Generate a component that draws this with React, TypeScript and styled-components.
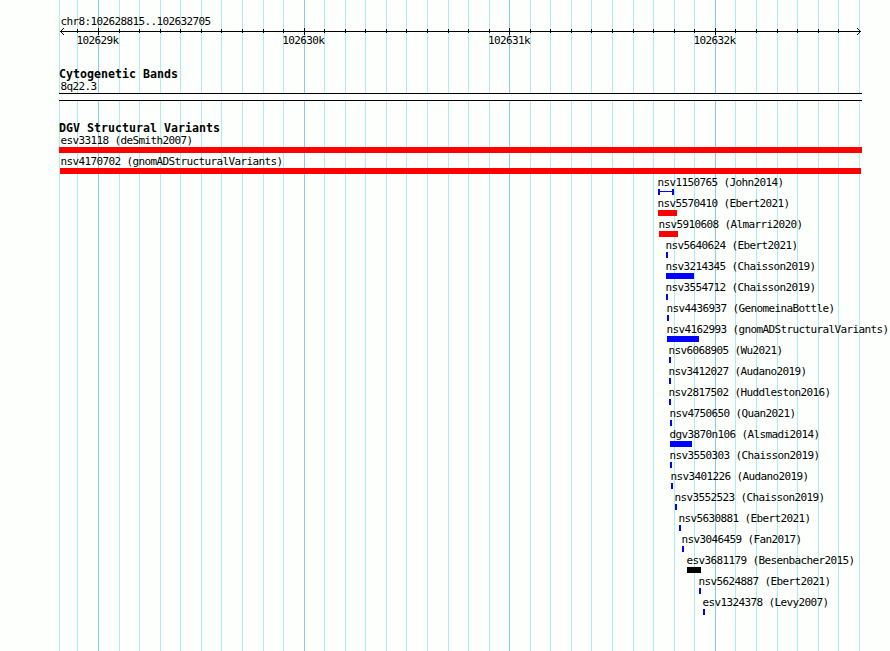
import React from 'react'
import styled, { createGlobalStyle } from 'styled-components'

// Types
type Shape = 'bar' | 'span'

type Variant = {
  name: string
  start: number
  end: number
  color?: string
  shape?: Shape
}

// Data
const WIDTH = 890
const HEIGHT = 651

const gridLines = [
  59, 77, 98, 119, 139, 160, 180, 201, 221, 242, 263, 283, 304, 324, 345, 365,
  386, 406, 427, 448, 468, 489, 509, 530, 550, 571, 591, 612, 633, 653, 674,
  694, 715, 735, 756, 777, 797, 818, 838, 859
]

const majorTicks = [
  { x: 98, label: '102629k' },
  { x: 304, label: '102630k' },
  { x: 509, label: '102631k' },
  { x: 715, label: '102632k' }
]

const LOSS = '#ff0000'
const GAIN = '#0000ff'
const COMPLEX = '#000000'

const variants: Variant[] = [
  { name: 'esv33118 (deSmith2007)', start: 59, end: 862, color: LOSS },
  { name: 'nsv4170702 (gnomADStructuralVariants)', start: 60, end: 861, color: LOSS },
  { name: 'nsv1150765 (John2014)', start: 658, end: 674, shape: 'span' },
  { name: 'nsv5570410 (Ebert2021)', start: 658, end: 677, color: LOSS },
  { name: 'nsv5910608 (Almarri2020)', start: 659, end: 678, color: LOSS },
  { name: 'nsv5640624 (Ebert2021)', start: 666, end: 668 },
  { name: 'nsv3214345 (Chaisson2019)', start: 666, end: 694 },
  { name: 'nsv3554712 (Chaisson2019)', start: 666, end: 668 },
  { name: 'nsv4436937 (GenomeinaBottle)', start: 667, end: 669 },
  { name: 'nsv4162993 (gnomADStructuralVariants)', start: 667, end: 699 },
  { name: 'nsv6068905 (Wu2021)', start: 669, end: 671 },
  { name: 'nsv3412027 (Audano2019)', start: 669, end: 671 },
  { name: 'nsv2817502 (Huddleston2016)', start: 669, end: 671 },
  { name: 'nsv4750650 (Quan2021)', start: 670, end: 672 },
  { name: 'dgv3870n106 (Alsmadi2014)', start: 670, end: 692 },
  { name: 'nsv3550303 (Chaisson2019)', start: 670, end: 672 },
  { name: 'nsv3401226 (Audano2019)', start: 671, end: 673 },
  { name: 'nsv3552523 (Chaisson2019)', start: 675, end: 677 },
  { name: 'nsv5630881 (Ebert2021)', start: 679, end: 681 },
  { name: 'nsv3046459 (Fan2017)', start: 682, end: 684 },
  { name: 'esv3681179 (Besenbacher2015)', start: 687, end: 701, color: COMPLEX },
  { name: 'nsv5624887 (Ebert2021)', start: 699, end: 701 },
  { name: 'esv1324378 (Levy2007)', start: 703, end: 705 }
]

// Style
const GlobalStyle = createGlobalStyle`
  body {
    margin: 0;
    background: #fdfffc;
  }
`

const Panel = styled.main`
  position: relative;
  width: ${WIDTH}px;
  height: ${HEIGHT}px;
  overflow: hidden;
  background: #fdfffc;
  color: #000;
  font-family: 'DejaVu Sans Mono', monospace;
  font-size: 11px;
  line-height: 13px;
  letter-spacing: -0.622px;
  white-space: pre;
`

const Grid = styled.svg`
  position: absolute;
  inset: 0;
`

const Tracks = styled.div`
  position: relative;
  display: flex;
  flex-direction: column;
`

const Ruler = styled.section`
  height: 53px;
  padding-top: 15px;
`

const Location = styled.div`
  height: 12px;
  padding-left: 60.5px;
`

const Axis = styled.svg`
  display: block;
`

const TickLabels = styled.div`
  display: flex;
  gap: 163.7px;
  padding-left: 76.5px;
  line-height: 11px;
`

const TickLabel = styled.span`
  width: 42px;
`

const Track = styled.section<{ $height?: number }>`
  ${({ $height }) => $height && `height: ${$height}px;`}
`

const TrackTitle = styled.h2`
  height: 12px;
  margin: 0;
  padding-left: 59px;
  font-size: 11.6px;
  font-weight: bold;
  line-height: 13px;
  letter-spacing: 0.017px;
`

const BandName = styled.div`
  height: 13px;
  padding-left: 60.5px;
`

const Band = styled.div`
  width: 803px;
  height: 6px;
  margin-left: 59px;
  border-top: 1px solid #000;
  border-bottom: 1px solid #000;
  background: #fff;
`

const VariantRow = styled.div<{ $start: number }>`
  height: 21px;
  padding-left: ${({ $start }) => $start}px;
`

const VariantName = styled.div<{ $shift: number }>`
  height: 13px;
  margin-left: ${({ $shift }) => $shift}px;
`

const Glyph = styled.div<{ $width: number; $color: string; $shape: Shape }>`
  display: flex;
  align-items: center;
  width: ${({ $width }) => $width}px;
  height: 6px;
  box-sizing: border-box;
  ${({ $shape, $color }) =>
    $shape === 'span'
      ? `border: solid ${$color}; border-width: 0 2px;`
      : `background: ${$color};`}
`

const SpanLine = styled.div<{ $color: string }>`
  width: 100%;
  height: 1px;
  margin-bottom: 1px;
  background: ${({ $color }) => $color};
`

// DOM
const GridLines: React.FC = () => (
  <Grid width={WIDTH} height={HEIGHT} shapeRendering="crispEdges">
    {gridLines.map((x) => (
      <rect
        key={x}
        x={x}
        y={0}
        width={1}
        height={HEIGHT}
        fill={majorTicks.some((t) => t.x === x) ? '#87ceeb' : '#afeeee'}
      />
    ))}
  </Grid>
)

const AxisLine: React.FC = () => (
  <Axis width={WIDTH} height={8} shapeRendering="crispEdges">
    <rect x={60} y={4} width={801} height={1} />
    {gridLines.slice(1, -1).map((x) => {
      const major = majorTicks.some((t) => t.x === x)
      return (
        <rect key={x} x={x} y={major ? 1 : 2} width={1} height={major ? 7 : 4} />
      )
    })}
    {[1, 2, 3].map((d) => (
      <React.Fragment key={d}>
        <rect x={60 + d} y={4 - d} width={1} height={1} />
        <rect x={60 + d} y={4 + d} width={1} height={1} />
        <rect x={860 - d} y={4 - d} width={1} height={1} />
        <rect x={860 - d} y={4 + d} width={1} height={1} />
      </React.Fragment>
    ))}
  </Axis>
)

const labelShift = (start: number) => {
  if (start === 59) return 1.5
  if (start === 60) return 0.5
  return -0.5
}

const VariantItem: React.FC<Variant> = ({
  name,
  start,
  end,
  color = GAIN,
  shape = 'bar'
}) => (
  <VariantRow $start={start}>
    <VariantName $shift={labelShift(start)}>{name}</VariantName>
    <Glyph $width={end - start} $color={color} $shape={shape}>
      {shape === 'span' && <SpanLine $color={color} />}
    </Glyph>
  </VariantRow>
)

const App: React.FC = () => (
  <>
    <GlobalStyle />
    <Panel>
      <GridLines />
      <Tracks>
        <Ruler>
          <Location>chr8:102628815..102632705</Location>
          <AxisLine />
          <TickLabels>
            {majorTicks.map(({ x, label }) => (
              <TickLabel key={x}>{label}</TickLabel>
            ))}
          </TickLabels>
        </Ruler>
        <Track $height={54}>
          <TrackTitle>Cytogenetic Bands</TrackTitle>
          <BandName>8q22.3</BandName>
          <Band />
        </Track>
        <Track>
          <TrackTitle>DGV Structural Variants</TrackTitle>
          {variants.map((v) => (
            <VariantItem key={v.name} {...v} />
          ))}
        </Track>
      </Tracks>
    </Panel>
  </>
)

export default App
